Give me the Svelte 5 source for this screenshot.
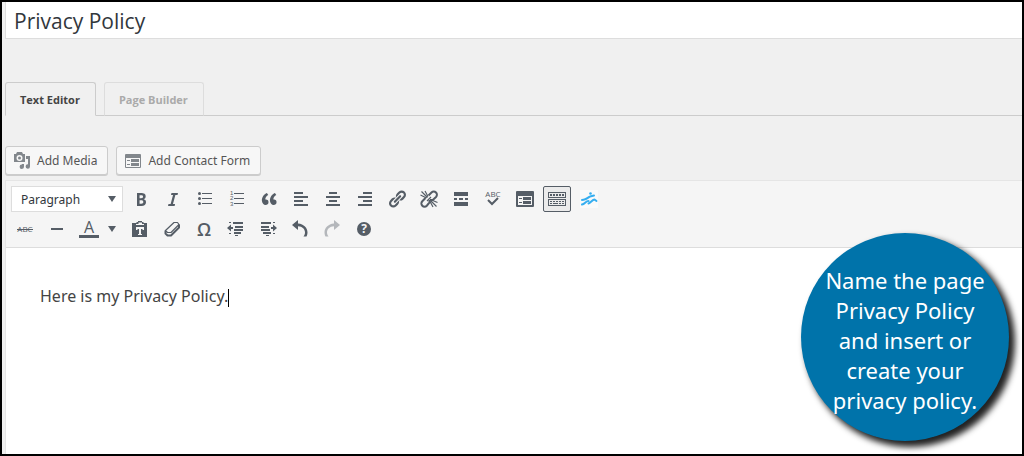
<script>
  let title = $state('Privacy Policy');
  let activeTab = $state('Text Editor');
  let format = $state('Paragraph');

  const tabs = ['Text Editor', 'Page Builder'];

  // Inner markup of every toolbar icon, drawn on a 20x20 grid
  const icons = {
    bold: '<path d="M6 4v13h4.54c1.37 0 2.46-.33 3.26-1 .8-.66 1.2-1.58 1.2-2.77 0-.84-.17-1.51-.51-2.01s-.9-.85-1.67-1.03v-.09c.57-.1 1.02-.4 1.36-.9s.51-1.13.51-1.91c0-1.14-.39-1.98-1.17-2.5C12.75 4.26 11.5 4 9.78 4H6zm2.57 5.15V6.26h1.36c.73 0 1.27.11 1.61.32.34.22.51.58.51 1.07 0 .54-.16.92-.47 1.15s-.82.35-1.51.35h-1.5zm0 2.19h1.6c1.44 0 2.16.53 2.16 1.61 0 .6-.17 1.05-.51 1.34s-.86.43-1.57.43H8.57v-3.38z"/>',
    italic: '<path d="M15 4l-.5 2h-2.130l-2.400 9h2.120l-.500 2H5l.500-2h2.140l2.400-9H8l.500-2z"/>',
    bullets: '<circle cx="4.5" cy="4.5" r="1.5"/><circle cx="4.5" cy="9.5" r="1.5"/><circle cx="4.5" cy="14.5" r="1.5"/><path d="M7 4h10v1H7zM7 9h10v1H7zM7 14h10v1H7z"/>',
    numbers: '<g font-family="Liberation Sans, sans-serif" font-size="6"><text x="3" y="6">1</text><text x="3" y="11">2</text><text x="3" y="17">3</text></g><path d="M7 4h10v1H7zM7 9h10v1H7zM7 14h10v1H7z"/>',
    quote: '<path d="M9.49 13.22c0-.74-.2-1.38-.61-1.9-.62-.78-1.83-.88-2.53-.72-.29-1.65 1.11-3.75 2.92-4.65L7.88 4c-2.73 1.3-5.42 4.28-4.96 8.05C3.21 14.43 4.59 16 6.54 16c.85 0 1.56-.25 2.12-.75s.83-1.18.83-2.03zm8.05 0c0-.74-.2-1.38-.61-1.9-.63-.78-1.83-.88-2.53-.72-.29-1.65 1.11-3.75 2.92-4.65L15.93 4c-2.73 1.3-5.41 4.28-4.95 8.05.29 2.38 1.66 3.95 3.61 3.95.85 0 1.56-.25 2.12-.75s.83-1.18.83-2.03z"/>',
    left: '<path d="M12 5V3H3v2h9zm5 4V7H3v2h14zm-5 4v-2H3v2h9zm5 4v-2H3v2h14z"/>',
    center: '<path d="M14 5V3H6v2h8zm3 4V7H3v2h14zm-3 4v-2H6v2h8zm3 4v-2H3v2h14z"/>',
    right: '<path d="M17 5V3H8v2h9zm0 4V7H3v2h14zm0 4v-2H8v2h9zm0 4v-2H3v2h14z"/>',
    link: '<path d="M17.74 2.76c1.68 1.69 1.68 4.41 0 6.1l-1.53 1.52c-1.12 1.12-2.7 1.47-4.14 1.09l2.62-2.61.76-.77.76-.76c.84-.84.84-2.2 0-3.04-.84-.85-2.2-.85-3.04 0l-.77.76-3.38 3.38c-.37-1.44-.02-3.02 1.1-4.14l1.52-1.53c1.69-1.68 4.42-1.68 6.1 0zM8.59 13.43l5.34-5.34c.42-.42.42-1.1 0-1.52-.44-.43-1.13-.39-1.53 0l-5.33 5.34c-.42.42-.42 1.1 0 1.52.44.43 1.13.39 1.52 0zm-.76 2.29l4.14-4.15c.38 1.44.03 3.02-1.09 4.14l-1.52 1.53c-1.69 1.68-4.41 1.68-6.1 0-1.68-1.68-1.68-4.42 0-6.1l1.53-1.52c1.12-1.12 2.7-1.47 4.14-1.1l-4.14 4.15c-.85.84-.85 2.2 0 3.05.84.84 2.2.84 3.04 0z"/>',
    unlink: '<g fill="none" stroke="currentColor"><path stroke-width="2" d="M9.500 6.500l3-3a3.100 3.100 0 0 1 4.500 4.500L13.800 11H11M6.500 9L3.300 12.200a3.100 3.100 0 0 0 4.500 4.500L10.500 13.500V11"/><path stroke-width="1.200" d="M8.500 8.500L2.500 2.500M9 7.500L6 2M7.500 9L1.500 6M11.500 11.500l6 6M11 12.500l3 5.500M12.500 11l6 2.500M8 12l4-4"/></g>',
    more: '<path d="M3 3h14v4H3zM3 13h14v4H3zM3 9h3v2H3zM8 9h4v2H8zM14 9h3v2h-3z"/>',
    spell: '<text x="10" y="8" text-anchor="middle" font-family="Open Sans, sans-serif" font-size="8">ABC</text><path fill="none" stroke="currentColor" stroke-width="2" d="M5 11l4 4 6-6"/>',
    form: '<path fill-rule="evenodd" d="M2 2h16a1 1 0 0 1 1 1v14a1 1 0 0 1-1 1H2a1 1 0 0 1-1-1V3a1 1 0 0 1 1-1zM3 7v9h14V7zM4 9h3v1H4zM4 13h3v1H4zM8 8h8v3H8zM8 12h8v3H8z"/>',
    keyboard: '<path fill-rule="evenodd" d="M1 3h18v6H1zM2 4v4h16V4zM1 10h18v7H1zM2 11v5h16v-5z"/><path d="M3 5h2v2H3zM6 5h2v2H6zM9 5h2v2H9zM12 5h2v2h-2zM15 5h2v2h-2zM3 12h2v1H3zM6 12h2v1H6zM9 12h2v1H9zM12 12h2v1h-2zM15 12h2v1h-2zM3 14h2v1H3zM6 14h5v1H6zM12 14h2v1h-2zM15 14h2v1h-2z"/>',
    slide: '<path fill="#fafafa" d="M1 1h18v18H1z"/><g fill="none" stroke="#35aef0" stroke-width="2" stroke-linecap="round" stroke-linejoin="round"><path d="M3 11c3 0 5-1.500 8-3.500l4-1M3 15.500c3-.5 3.500-3.500 6.500-3.500M9.500 14.500c2-.5 4-4 6-4l2 1.500"/></g><circle cx="11.500" cy="4.500" r="1.300" fill="#35aef0"/>',
    strike: '<text x="10" y="13" text-anchor="middle" font-family="Open Sans, sans-serif" font-size="8">ABC</text><path d="M2 10h16v1H2z"/>',
    rule: '<path d="M4 9h12v2H4z"/>',
    color: '<text x="10" y="14" text-anchor="middle" font-family="Open Sans, sans-serif" font-size="16">A</text><path d="M0 16h20v3H0z"/>',
    paste: '<path fill-rule="evenodd" d="M3 4h3l1-1h1V2h4v1h1l1 1h3v14H2V4zM6 5v1h8V5h-2V3.500H8.500V5zM6 8v3h1.500v-1h1.500v5H8v1h4v-1h-1v-5h1.500v1H14V8z"/>',
    eraser: '<g fill="none" stroke="currentColor" stroke-width="1.200" stroke-linejoin="round"><path d="M12 3.500h3.500L17 5.500 9 13.500H5.500L3.500 11.500z"/><path stroke-width="2" d="M3.500 11.500v3l2 2H9l8-8v-3"/></g>',
    omega: '<text x="10" y="17" text-anchor="middle" font-family="Open Sans, sans-serif" font-size="18" font-weight="600">Ω</text>',
    outdent: '<path d="M3 3h2v1H3zM7 3h10v2H7zM9 7h8v2H9zM8 10h9v2H8zM8 13h7v2H8zM3 14h2v1H3zM9 16h3v1H9zM1 9l4-3.500V8h2v2H5v2.500z"/>',
    indent: '<path d="M15 3h2v1h-2zM3 3h10v2H3zM3 7h8v2H3zM3 10h9v2H3zM5 13h8v2H5zM15 14h2v1h-2zM8 16h3v1H8zM19 9l-4-3.500V8h-2v2h2v2.500z"/>',
    undo: '<path d="M2 6L8 1v3.500c6 .5 9.500 4.500 9.500 9 0 1.500-.5 3-1 4h-3c1-1.500 1.500-2.500 1.500-4 0-3.500-2.500-6-7-6.300V11z"/>',
    redo: '<path d="M18 6L12 1v3.500C6 5 2.500 9 2.500 13.500c0 1.500.5 3 1 4h3C5.500 16 5 15 5 13.500c0-3.500 2.500-6 7-6.300V11z"/>',
    help: '<circle cx="10" cy="10" r="7"/><text x="10" y="14" text-anchor="middle" font-family="Open Sans, sans-serif" font-size="12" font-weight="700" fill="#f5f5f5">?</text>',
  };

  const topRow = [
    { icon: 'bold', label: 'Bold' },
    { icon: 'italic', label: 'Italic' },
    { icon: 'bullets', label: 'Bulleted list' },
    { icon: 'numbers', label: 'Numbered list' },
    { icon: 'quote', label: 'Blockquote' },
    { icon: 'left', label: 'Align left' },
    { icon: 'center', label: 'Align center' },
    { icon: 'right', label: 'Align right' },
    { icon: 'link', label: 'Insert link' },
    { icon: 'unlink', label: 'Remove link' },
    { icon: 'more', label: 'Read more tag' },
    { icon: 'spell', label: 'Proofread' },
    { icon: 'form', label: 'Add form' },
    { icon: 'keyboard', label: 'Toolbar toggle', active: true },
    { icon: 'slide', label: 'Insert slider' },
  ];

  const bottomRow = [
    { icon: 'strike', label: 'Strikethrough' },
    { icon: 'rule', label: 'Horizontal line' },
    { icon: 'color', label: 'Text color', menu: true },
    { icon: 'paste', label: 'Paste as text' },
    { icon: 'eraser', label: 'Clear formatting' },
    { icon: 'omega', label: 'Special character' },
    { icon: 'outdent', label: 'Decrease indent' },
    { icon: 'indent', label: 'Increase indent' },
    { icon: 'undo', label: 'Undo' },
    { icon: 'redo', label: 'Redo', disabled: true },
    { icon: 'help', label: 'Keyboard shortcuts' },
  ];
</script>

{#snippet tool(item)}
  <button
    class="tool"
    class:active={item.active}
    class:menu={item.menu}
    disabled={item.disabled}
    aria-label={item.label}
  >
    <svg width="20" height="20" viewBox="0 0 20 20" fill="currentColor">{@html icons[item.icon]}</svg>
    {#if item.menu}
      <svg width="8" height="6" viewBox="0 0 8 6" fill="currentColor"><path d="M0 0h8L4 6z" /></svg>
    {/if}
  </button>
{/snippet}

<main>
  <input class="title" type="text" aria-label="Page title" bind:value={title} />

  <div class="tabs" role="tablist">
    {#each tabs as tab}
      <button
        class="tab"
        class:selected={tab === activeTab}
        role="tab"
        aria-selected={tab === activeTab}
        onclick={() => (activeTab = tab)}>{tab}</button>
    {/each}
  </div>

  <div class="media">
    <button>
      <svg width="18" height="18" viewBox="0 0 18 18" fill="currentColor">
        <path fill-rule="evenodd" d="M1 2h2l1-2h5l1 2h2v8H1zM6.500 3a3 3 0 1 0 0 6 3 3 0 0 0 0-6z" />
        <circle cx="6.500" cy="6" r="1.500" />
        <path d="M13 4h4v10.500a2.200 2.200 0 1 1-2-2.200V7h-2zM9 12h2v2.500A2.200 2.200 0 1 1 9 12.500z" />
      </svg>
      Add Media
    </button>
    <button>
      <svg width="18" height="18" viewBox="0 0 18 18" fill="currentColor">
        <path fill-rule="evenodd" d="M2 2h14a1 1 0 0 1 1 1v12a1 1 0 0 1-1 1H2a1 1 0 0 1-1-1V3a1 1 0 0 1 1-1zM2 6v9h14V6zM3 8h3v1H3zM3 12h3v1H3zM7 7h8v3H7zM7 11h8v3H7z" />
      </svg>
      Add Contact Form
    </button>
  </div>

  <section class="editor">
    <div class="toolbar">
      <div class="row">
        <div class="format">
          <select aria-label="Text format" bind:value={format}>
            <option>Paragraph</option>
            <option>Heading 1</option>
            <option>Heading 2</option>
            <option>Preformatted</option>
          </select>
          <svg class="arrow" width="8" height="6" viewBox="0 0 8 6" fill="currentColor"><path d="M0 0h8L4 6z" /></svg>
        </div>
        {#each topRow as item}
          {@render tool(item)}
        {/each}
      </div>
      <div class="row">
        {#each bottomRow as item}
          {@render tool(item)}
        {/each}
      </div>
    </div>
    <div class="content" contenteditable="true" role="textbox" aria-label="Page content" tabindex="0">
      <p>Here is my Privacy Policy.<span class="caret"></span></p>
    </div>
  </section>

  <aside>Name the page Privacy Policy and insert or create your privacy policy.</aside>
</main>

<style>
  :global(body) {
    background: #000;
  }

  main {
    position: relative;
    box-sizing: border-box;
    display: flex;
    flex-direction: column;
    min-height: 100vh;
    padding-left: 3px;
    border: 2px solid #000;
    background: #f0f0f0;
    color: #444;
    font-family: 'Noto Sans', 'Open Sans', sans-serif;
    font-size: 12px;
    overflow: hidden;
  }

  button,
  select,
  input {
    font: inherit;
    color: inherit;
  }

  .title {
    box-sizing: border-box;
    width: 100%;
    height: 37px;
    padding: 2px 8px 0;
    border: 1px solid #ddd;
    border-width: 0 0 1px 1px;
    outline: none;
    background: #fff;
    color: #32373c;
    font-family: 'Open Sans', sans-serif;
    font-size: 21px;
  }

  .tabs {
    display: flex;
    gap: 8px;
    margin-top: 43px;
    border-bottom: 1px solid #ccc;
  }

  .tab {
    height: 34px;
    margin-bottom: -1px;
    padding: 0 15px 0 14px;
    border: 1px solid #ddd;
    border-bottom-color: #ccc;
    border-radius: 3px 3px 0 0;
    background: #f0f0f0;
    color: #aaa;
    font-family: 'Open Sans', sans-serif;
    font-size: 11px;
    font-weight: 700;
  }

  .tab.selected {
    border-color: #ccc;
    border-bottom-color: #f0f0f0;
    color: #444;
  }

  .media {
    display: flex;
    gap: 8px;
    margin: 30px 0 5px;
  }

  .media button {
    display: flex;
    align-items: center;
    gap: 6px;
    height: 29px;
    padding: 0 10px 0 7px;
    border: 1px solid #ccc;
    border-radius: 3px;
    box-shadow: 0 1px 0 #ccc;
    background: #f7f7f7;
    color: #555;
  }

  .media svg {
    color: #82878c;
  }

  .editor {
    display: flex;
    flex: 1;
    flex-direction: column;
    border: 1px solid #e5e5e5;
    border-width: 1px 0 0 1px;
    background: #fff;
  }

  .toolbar {
    display: flex;
    flex-direction: column;
    gap: 4px;
    padding: 5px;
    border-bottom: 1px solid #ddd;
    background: #f5f5f5;
  }

  .row {
    display: flex;
    gap: 4px;
  }

  .format {
    position: relative;
    color: #32373c;
  }

  .format select {
    appearance: none;
    box-sizing: border-box;
    width: 112px;
    height: 26px;
    padding: 0 24px 0 9px;
    border: 1px solid #ddd;
    border-radius: 0;
    background: #fff;
  }

  .arrow {
    position: absolute;
    top: 10px;
    right: 7px;
    color: #555d66;
    pointer-events: none;
  }

  .tool {
    display: flex;
    align-items: center;
    justify-content: center;
    gap: 9px;
    width: 28px;
    height: 26px;
    padding: 0;
    border: 1px solid transparent;
    border-radius: 2px;
    background: none;
    color: #555d66;
  }

  .tool svg {
    overflow: visible;
  }

  .tool.menu {
    width: 47px;
    padding-right: 2px;
  }

  .tool.active {
    border-color: #555d66;
    background: #ebebeb;
  }

  .tool:disabled {
    opacity: 0.4;
  }

  .content {
    flex: 1;
    padding: 36px 34px;
    outline: none;
    color: #444;
    font-size: 16px;
    line-height: 24px;
  }

  .content p {
    margin: 0;
  }

  .caret {
    display: inline-block;
    height: 18px;
    border-left: 1px solid #000;
    vertical-align: middle;
  }

  aside {
    position: absolute;
    right: 13px;
    bottom: 13px;
    box-sizing: border-box;
    display: flex;
    align-items: center;
    width: 208px;
    height: 208px;
    padding: 6px 20px 0;
    border-radius: 50%;
    box-shadow: 5px 5px 6px 1px #222;
    background: #0073aa;
    color: #fff;
    font-size: 22px;
    line-height: 30px;
    text-align: center;
  }
</style>
